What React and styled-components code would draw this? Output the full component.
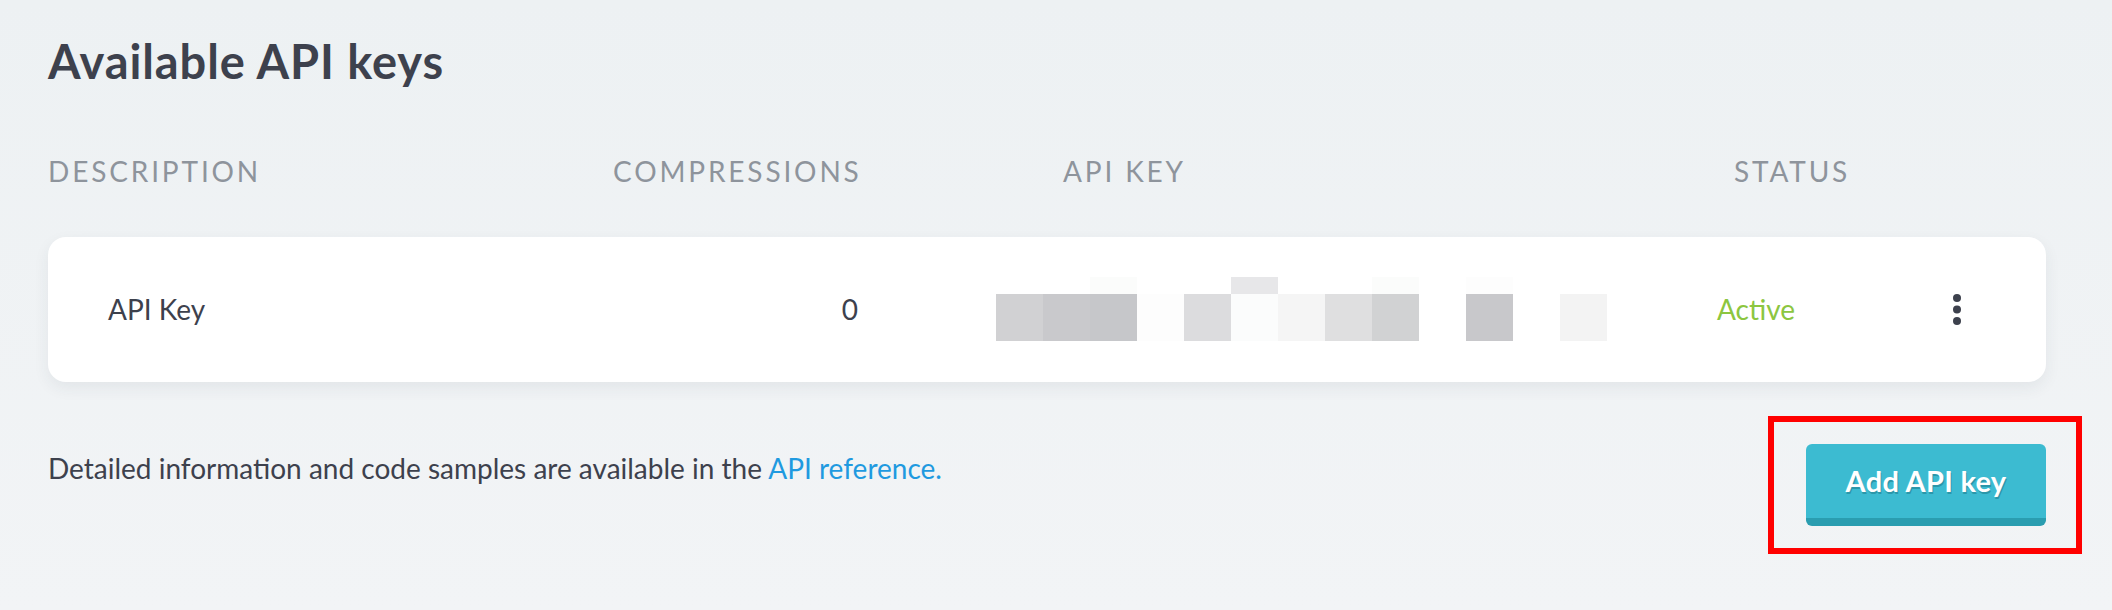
import styled, { createGlobalStyle } from "styled-components";

const GlobalStyle = createGlobalStyle`
  html, body {
    margin: 0;
    padding: 0;
  }
  body {
    background: linear-gradient(#edf1f3, #f2f4f6);
    font-family: Lato, "Open Sans", sans-serif;
    color: #3d414d;
  }
`;

// blurred key: one colour per cell, top row and main row
const keyTop = [null, null, "#fbfcfb", null, null, "#e7e7e9", null, null, "#fbfcfb", null, "#fdfdfd", null, null];
const keyMain = ["#d1d1d3", "#c9c9cc", "#c6c7ca", "#fdfdfd", "#dcdcde", "#fbfcfc", "#f5f5f5", "#dfdfe0", "#d1d2d3", null, "#c8c8cb", null, "#f3f3f3"];

const Page = styled.div`
  height: 610px;
  padding: 33px 66px 0 48px;
  box-sizing: border-box;
  overflow: hidden;
`;

const Title = styled.h1`
  margin: 0;
  font-size: 47px;
  font-weight: 700;
  line-height: 1.2;
  letter-spacing: 0.9px;
  color: #3d414d;
`;

const HeaderRow = styled.div`
  display: grid;
  grid-template-columns: 565px 246px 875px 1fr;
  margin-top: 66px;
`;

const HeadCell = styled.div`
  font-size: 28px;
  font-weight: 400;
  line-height: 1.2;
  letter-spacing: 2.85px;
  color: #8e949c;
  text-align: ${p => p.align || "left"};
  padding-left: ${p => p.indent || 0}px;
  white-space: nowrap;
`;

const Card = styled.div`
  margin-top: 48px;
  height: 145px;
  background: #fff;
  border-radius: 18px;
  box-shadow: 0 6px 16px rgba(40, 50, 70, 0.07);
  display: grid;
  grid-template-columns: 500px 250px 859px 1fr auto;
  align-items: center;
  padding: 0 85px 0 60px;
`;

const Cell = styled.div`
  font-size: 28px;
  line-height: 1.2;
  color: ${p => p.color || "#3d414d"};
  text-align: ${p => p.align || "left"};
  padding-left: ${p => p.indent || 0}px;
`;

const KeyBlur = styled.div`
  display: grid;
  grid-template-columns: repeat(13, 47px);
  grid-template-rows: 17px 47px;
`;

const Px = styled.div`
  background: ${p => p.c || "transparent"};
`;

const Footer = styled.div`
  display: flex;
  justify-content: space-between;
  align-items: flex-start;
  margin-top: 34px;
`;

const Note = styled.p`
  margin: 0;
  padding-top: 36px;
  font-size: 28px;
  line-height: 1.2;
  color: #3d414d;
`;

const Link = styled.a`
  color: #1f9ae0;
  text-decoration: none;
`;

const Highlight = styled.div`
  border: 6px solid #ff0000;
  padding: 22px 30px 22px 32px;
  margin-right: -36px;
`;

const AddButton = styled.button`
  width: 240px;
  height: 82px;
  border: none;
  border-bottom: 8px solid #2a9db0;
  border-radius: 6px;
  background: #3cbbd1;
  color: #fff;
  font-family: Lato, "Open Sans", sans-serif;
  font-size: 29px;
  font-weight: 700;
  letter-spacing: 0.3px;
  text-shadow: 1px 2px 0 #2b97aa;
  cursor: pointer;
  padding: 0;
`;

function Dots() {
    return (
        <svg width="8" height="31" viewBox="0 0 8 31">
            <circle cx="4" cy="4" r="4" fill="#3d414d"/>
            <circle cx="4" cy="15.5" r="4" fill="#3d414d"/>
            <circle cx="4" cy="27" r="4" fill="#3d414d"/>
        </svg>
    );
}

function App() {
    return (
        <>
            <GlobalStyle/>
            <Page>
                <Title>Available API keys</Title>
                <HeaderRow>
                    <HeadCell>DESCRIPTION</HeadCell>
                    <HeadCell align="right">COMPRESSIONS</HeadCell>
                    <HeadCell indent={204}>API KEY</HeadCell>
                    <HeadCell>STATUS</HeadCell>
                </HeaderRow>
                <Card>
                    <Cell>API Key</Cell>
                    <Cell align="right">0</Cell>
                    <Cell indent={138}>
                        <KeyBlur>
                            {keyTop.map((c, i) => <Px key={"t" + i} c={c}/>)}
                            {keyMain.map((c, i) => <Px key={"m" + i} c={c}/>)}
                        </KeyBlur>
                    </Cell>
                    <Cell color="#8cc63f">Active</Cell>
                    <Dots/>
                </Card>
                <Footer>
                    <Note>
                        Detailed information and code samples are available in the <Link href="#">API reference.</Link>
                    </Note>
                    <Highlight>
                        <AddButton>Add API key</AddButton>
                    </Highlight>
                </Footer>
            </Page>
        </>
    );
}

export default App;
